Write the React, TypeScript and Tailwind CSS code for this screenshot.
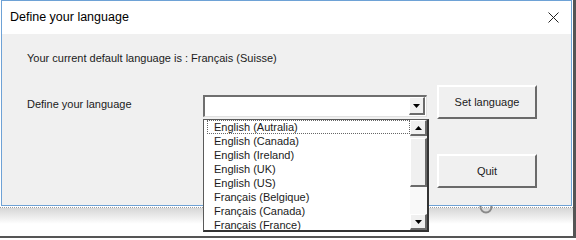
const items = [
  'English (Autralia)',
  'English (Canada)',
  'English (Ireland)',
  'English (UK)',
  'English (US)',
  'Français (Belgique)',
  'Français (Canada)',
  'Français (France)',
];

function Arrow({ up }: { up?: boolean }) {
  return (
    <svg width="7" height="4" viewBox="0 0 7 4">
      <polygon points={up ? '0,4 7,4 3.5,0' : '0,0 7,0 3.5,4'} fill="#000" />
    </svg>
  );
}

export default function App() {
  return (
    <div className="w-[576px] h-[240px] bg-white relative overflow-hidden font-['Liberation_Sans',Arial,sans-serif] text-[#1b1b1b]">
      <div className="w-[576px] h-[238px] border-r-[3px] border-b-2 border-[#555] flex flex-col">
        {/* window */}
        <div className="relative z-10 ml-[1px] w-[571px] h-[206px] border border-[#6ea2d6] bg-white flex flex-col">
          <div className="h-[33px] flex items-center justify-between pl-[8px] pr-[12px] shrink-0">
            <span className="text-[12.5px] text-black">Define your language</span>
            <svg width="11" height="11" viewBox="0 0 11 11">
              <path d="M0.5 0.5 L10.5 10.5 M10.5 0.5 L0.5 10.5" stroke="#222" strokeWidth="1" />
            </svg>
          </div>
          <div className="flex-1 bg-[#f0f0f0] pl-[25px] pt-[17px]">
            <p className="text-[11px] leading-[14px] h-[14px]">Your current default language is : Français (Suisse)</p>
            <div className="flex items-start mt-[20px]">
              <div className="w-[176px] mt-[12px] text-[11px] leading-[14px]">Define your language</div>
              <div className="relative mt-[10px] w-[224px] h-[22px] flex border-t-2 border-l-2 border-[#6f6f6f] border-r border-b border-r-[#e0e0e0] border-b-[#e0e0e0] bg-white">
                <div className="flex-1" />
                <div className="w-[16px] h-[18px] mr-[1px] bg-[#f0f0f0] border-t border-l border-white border-r-2 border-b-2 border-r-[#6a6a6a] border-b-[#6a6a6a] flex items-center justify-center">
                  <Arrow />
                </div>
                {/* dropdown list */}
                <div className="absolute left-[-2px] top-[22px] w-[226px] h-[113px] bg-white border-t border-l border-[#5a5a5a] border-r-2 border-b-2 border-r-[#333] border-b-[#333] flex overflow-hidden">
                  <div className="flex-1 pt-0 text-[11px]">
                    {items.map((it, i) => (
                      <div
                        key={it}
                        className={
                          i === 0
                            ? 'h-[14px] leading-[12px] ml-[3px] pl-[6px] border border-dotted border-[#666]'
                            : 'h-[14px] leading-[12px] ml-[3px] pl-[6px] border border-transparent'
                        }
                      >
                        {it}
                      </div>
                    ))}
                  </div>
                  <div className="w-[17px] bg-[#f0f0f0] flex flex-col">
                    <div className="h-[16px] bg-[#f0f0f0] border-t border-l border-white border-r-2 border-b-2 border-r-[#6a6a6a] border-b-[#6a6a6a] flex items-center justify-center">
                      <Arrow up />
                    </div>
                    <div className="h-[2px]" />
                    <div className="h-[49px] bg-[#f0f0f0] border-t border-l border-white border-r-2 border-b-2 border-r-[#6a6a6a] border-b-[#6a6a6a]" />
                    <div className="flex-1 bg-[#f9f9f9]" />
                    <div className="h-[16px] bg-[#f0f0f0] border-t border-l border-white border-r-2 border-b-2 border-r-[#6a6a6a] border-b-[#6a6a6a] flex items-center justify-center">
                      <Arrow />
                    </div>
                  </div>
                </div>
              </div>
              <div className="ml-[10px] flex flex-col">
                <button className="w-[100px] h-[34px] bg-[#f0f0f0] text-[11px] border-t-2 border-l-2 border-white border-r-2 border-b-2 border-r-[#6a6a6a] border-b-[#6a6a6a]">
                  Set language
                </button>
                <button className="mt-[35px] w-[100px] h-[34px] bg-[#f0f0f0] text-[11px] border-t-2 border-l-2 border-white border-r-2 border-b-2 border-r-[#6a6a6a] border-b-[#6a6a6a]">
                  Quit
                </button>
              </div>
            </div>
          </div>
        </div>
        {/* window shadow */}
        <div className="mt-[1px] border-t border-dotted border-[#9a9a9a]" />
        <div className="h-[16px] bg-linear-to-b from-[#d6d6d6] to-white" />
      </div>
      <svg className="absolute left-[479px] top-[200px] z-[5]" width="14" height="14" viewBox="0 0 14 14">
        <circle cx="7" cy="7" r="5.5" fill="none" stroke="#8a8a8a" strokeWidth="2" />
      </svg>
    </div>
  );
}
